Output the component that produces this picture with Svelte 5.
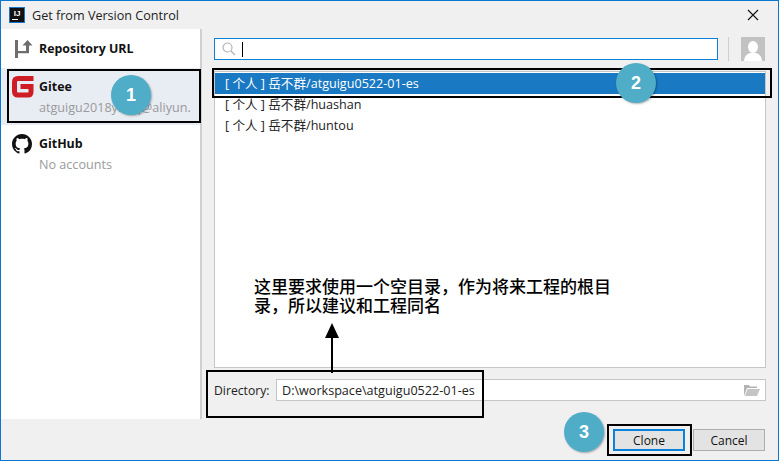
<script>
  const repos = [
    { name: 'atguigu0522-01-es', selected: true },
    { name: 'huashan', selected: false },
    { name: 'huntou', selected: false }
  ];
</script>

<div class="window">
  <header class="titlebar">
    <div class="logo"><span>IJ</span><i></i></div>
    <span class="title">Get from Version Control</span>
    <svg class="close" width="12" height="12" viewBox="0 0 12 12"><path d="M1 1l10 10M11 1L1 11" stroke="#111" stroke-width="1.1" fill="none"/></svg>
  </header>

  <div class="body">
    <aside class="sidebar">
      <div class="account url">
        <svg class="ico" width="20" height="20" viewBox="0 0 20 20">
          <path d="M1 1h3v18H1z" fill="#6e6e6e"/>
          <path d="M4 12h8V6h3v8.300H4z" fill="#6e6e6e"/>
          <path d="M13.500 1l5 5.500H8.500z" fill="#6e6e6e"/>
        </svg>
        <strong>Repository URL</strong>
      </div>
      <div class="account gitee">
        <svg class="ico-g" width="23" height="23" viewBox="0 0 23 23">
          <path d="M22.500 3.500H7Q3.500 3.500 3.500 7V16.500Q3.500 20 7 20H17Q20 20 20 17V11.500H9.500" stroke="#cf1d26" stroke-width="5" fill="none"/>
        </svg>
        <div class="info">
          <strong>Gitee</strong>
          <span>atguigu2018ybqq@aliyun.com</span>
        </div>
      </div>
      <div class="account github">
        <svg class="ico-h" width="20" height="20" viewBox="0 0 16 16">
          <path fill="#111" d="M8 0C3.580 0 0 3.580 0 8c0 3.540 2.290 6.530 5.470 7.590.4.070.55-.17.55-.38 0-.19-.01-.82-.01-1.490-2.010.37-2.530-.49-2.690-.94-.09-.23-.48-.94-.82-1.130-.28-.15-.68-.52-.01-.53.630-.01 1.080.58 1.230.82.720 1.210 1.870.87 2.330.66.070-.52.280-.87.510-1.070-1.780-.2-3.640-.89-3.640-3.950 0-.87.310-1.590.82-2.150-.08-.2-.36-1.020.08-2.120 0 0 .67-.21 2.200.82.640-.18 1.320-.27 2-.27s1.360.09 2 .27c1.530-1.040 2.200-.82 2.200-.82.440 1.100.16 1.920.08 2.120.51.560.82 1.270.82 2.150 0 3.070-1.870 3.750-3.650 3.950.29.250.54.730.54 1.480 0 1.070-.01 1.930-.01 2.200 0 .21.150.46.550.38A8.010 8.010 0 0 0 16 8c0-4.420-3.580-8-8-8z"/>
        </svg>
        <div class="info">
          <strong>GitHub</strong>
          <span>No accounts</span>
        </div>
      </div>
    </aside>

    <main class="panel">
      <div class="toolbar">
        <div class="search">
          <svg width="14" height="14" viewBox="0 0 14 14"><circle cx="5.500" cy="5.500" r="4.500" stroke="#b5b5b5" stroke-width="1.200" fill="none"/><path d="M9 9l4 4" stroke="#b5b5b5" stroke-width="1.400"/></svg>
          <i class="caret"></i>
        </div>
        <div class="sep"></div>
        <svg class="avatar" width="24" height="24" viewBox="0 0 24 24">
          <rect width="24" height="24" fill="#c2c2c2"/>
          <ellipse cx="12" cy="10" rx="5" ry="6" fill="#fff"/>
          <path d="M3 24q0-6 6-8h6q6 2 6 8z" fill="#fff"/>
        </svg>
      </div>

      <ul class="list">
        {#each repos as repo}
          <li class:selected={repo.selected}>[ 个人 ] 岳不群/{repo.name}</li>
        {/each}
      </ul>

      <div class="dir">
        <label for="dir">Directory:</label>
        <div class="dir-field">
          <input id="dir" value="D:\workspace\atguigu0522-01-es" />
          <svg width="16" height="12" viewBox="0 0 16 12"><path d="M0 1h5l1 1.500h7V4H3L0 12z" fill="#b4b4b4"/><path d="M3.500 5H16l-3 7H1z" fill="#c4c4c4"/></svg>
        </div>
      </div>
    </main>
  </div>

  <footer class="footer">
    <button class="btn primary">Clone</button>
    <button class="btn">Cancel</button>
  </footer>

  <div class="mark m1"></div>
  <div class="mark m2"></div>
  <div class="mark m3"></div>
  <div class="mark m4"></div>
  <div class="badge b1">1</div>
  <div class="badge b2">2</div>
  <div class="badge b3">3</div>
  <p class="note">这里要求使用一个空目录，作为将来工程的根目录，所以建议和工程同名</p>
  <svg class="arrow" width="16" height="50" viewBox="0 0 16 50"><path d="M8 14v36" stroke="#000" stroke-width="2" fill="none"/><path d="M8 0l7 15H1z" fill="#000"/></svg>
</div>

<style>
  :global(body) { margin: 0; }
  .window {
    position: relative;
    box-sizing: border-box;
    width: 779px;
    height: 461px;
    border: 1px solid #0a78d0;
    background: #f0f0f0;
    font-family: "Open Sans", "Noto Sans CJK SC", sans-serif;
    font-size: 12.6px;
    color: #1a1a1a;
    display: flex;
    flex-direction: column;
    overflow: hidden;
  }
  .titlebar {
    height: 28px;
    display: flex;
    align-items: center;
    padding-left: 8px;
    flex: none;
  }
  .logo {
    width: 14px;
    height: 14px;
    background: #111;
    border: 1px solid #1b78c8;
    color: #fff;
    font: 700 8px/10px "Liberation Sans", sans-serif;
    position: relative;
    text-align: center;
    margin-right: 7px;
  }
  .logo span { display: block; padding-top: 1px; }
  .logo i { position: absolute; left: 2px; bottom: 2px; width: 6px; height: 1px; background: #fff; }
  .title { color: #222; }
  .close { margin-left: auto; margin-right: 19px; }

  .body { flex: 1; display: flex; min-height: 0; }
  .sidebar {
    width: 199px;
    flex: none;
    background: #fff;
    border-right: 2px solid #d0d0d0;
    box-sizing: content-box;
  }
  .account { display: flex; overflow: hidden; box-sizing: border-box; padding-right: 9px; }
  .url { height: 39px; align-items: center; padding-left: 13px; gap: 5px; }
  strong { font-size: 12.4px; font-weight: 700; color: #111; }
  .gitee { height: 57px; background: #e8ecf3; padding-top: 10px; padding-left: 10px; gap: 5px; }
  .ico-g { margin-top: -3px; flex: none; }
  .info { display: flex; flex-direction: column; gap: 4px; white-space: nowrap; min-width: 0; overflow: hidden; }
  .info span { color: #9a9a9a; }
  .github { height: 57px; padding-top: 10px; padding-left: 11px; gap: 7px; }
  .ico-h { flex: none; margin-top: -1px; }

  .panel { flex: 1; padding: 8px 12px 0; min-width: 0; }
  .toolbar { display: flex; align-items: center; height: 24px; }
  .search {
    box-sizing: border-box;
    width: 504px;
    height: 22px;
    background: #fff;
    border: 1px solid #0a82dc;
    display: flex;
    align-items: center;
    padding-left: 7px;
    gap: 6px;
  }
  .caret { width: 1px; height: 15px; background: #000; }
  .sep { width: 1px; height: 24px; background: #cfcfcf; margin: 0 12px 0 10px; }
  .list {
    list-style: none;
    margin: 10px 0 0;
    padding: 1px 0 0;
    width: 552px;
    height: 297px;
    box-sizing: border-box;
    background: #fff;
    border: 1px solid #c6c6c6;
  }
  .list li {
    height: 21px;
    line-height: 21px;
    padding-left: 10px;
    white-space: nowrap;
    color: #222;
  }
  .list li.selected { background: #1a79c3; color: #fff; }
  .dir { display: flex; align-items: center; margin-top: 11px; height: 22px; }
  .dir label { width: 62px; font-size: 12.2px; color: #222; flex: none; }
  .dir-field {
    flex: none;
    box-sizing: border-box;
    width: 490px;
    height: 22px;
    background: #fff;
    border: 1px solid #c6c6c6;
    display: flex;
    align-items: center;
    padding-right: 5px;
  }
  .dir-field input {
    flex: 1;
    border: 0;
    outline: 0;
    background: none;
    font: inherit;
    color: #222;
    padding: 0 0 0 5px;
    min-width: 0;
  }

  .footer {
    flex: none;
    height: 41px;
    display: flex;
    justify-content: flex-end;
    gap: 8px;
    padding: 10px 13px 0 0;
    box-sizing: border-box;
    background: #f0f0f0;
  }
  .btn {
    box-sizing: border-box;
    width: 72px;
    height: 22px;
    background: #e3e3e3;
    border: 1px solid #adadad;
    font: inherit;
    font-size: 12px;
    color: #111;
    padding: 0;
  }
  .primary { border: 2px solid #0a82dc; }

  .mark { position: absolute; box-sizing: border-box; border: 2px solid #000; }
  .m1 { left: 6px; top: 68px; width: 194px; height: 54px; }
  .m2 { left: 211px; top: 67px; width: 560px; height: 30px; }
  .m3 { left: 205px; top: 369px; width: 278px; height: 48px; }
  .m4 { left: 606px; top: 423px; width: 85px; height: 32px; }

  .badge {
    position: absolute;
    width: 40px;
    height: 40px;
    border-radius: 50%;
    background: #4fadc8;
    color: #fff;
    font: 700 18px/40px "Liberation Sans", sans-serif;
    text-align: center;
    box-shadow: 1px 1px 2px rgba(0, 0, 0, .3);
  }
  .b1 { left: 110px; top: 74px; }
  .b2 { left: 615px; top: 62px; }
  .b3 { left: 563px; top: 411px; }

  .note {
    position: absolute;
    left: 253px;
    top: 276px;
    width: 360px;
    margin: 0;
    font-size: 17px;
    line-height: 19px;
    font-weight: 500;
    color: #000;
  }
  .arrow { position: absolute; left: 323px; top: 322px; }
</style>
